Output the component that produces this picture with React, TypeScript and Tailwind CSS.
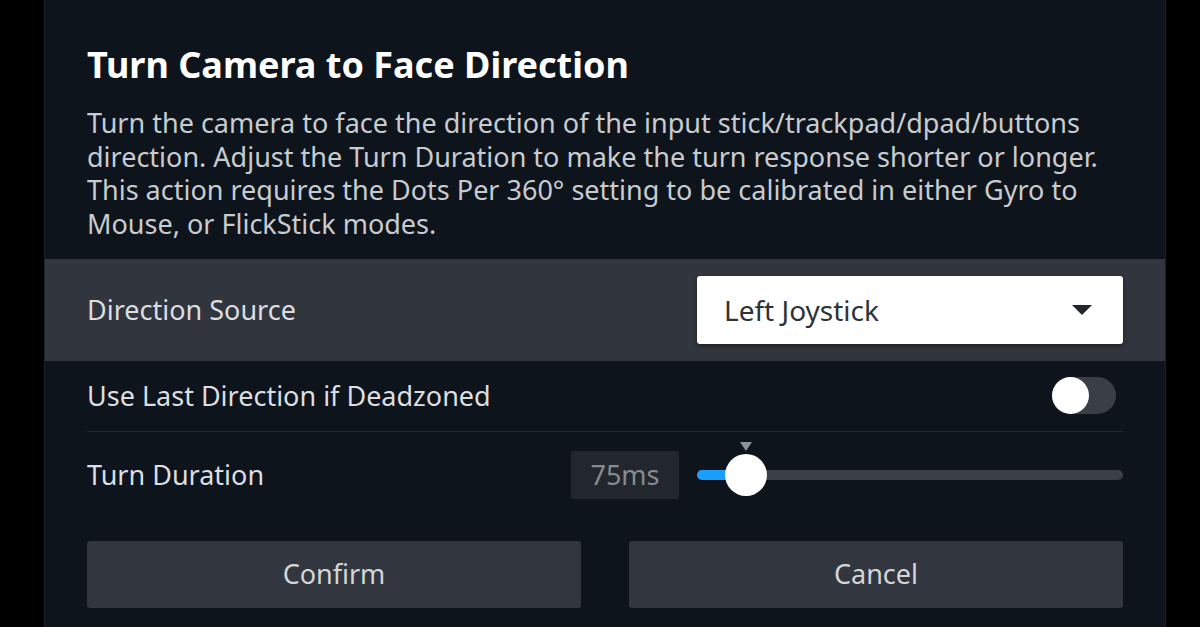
import React from "react";

const font = { fontFamily: '"Noto Sans", "Open Sans", sans-serif' };

function Toggle() {
  return (
    <div className="relative mr-[7px] h-[37px] w-[64px] rounded-full bg-[#3a3e45]">
      <div className="absolute left-0 top-0 size-[37px] rounded-full bg-white" />
    </div>
  );
}

function Slider() {
  return (
    <div className="relative flex h-[42px] flex-1 items-center">
      <div className="h-[10px] w-full rounded-full bg-[#3b3f46]" />
      <div className="absolute left-0 top-[16px] h-[10px] w-[50px] rounded-l-full bg-[#1a9fff]" />
      <div className="absolute left-[28px] top-0 size-[42px] rounded-full bg-white" />
      <div className="absolute left-[43px] top-[-12px] h-0 w-0 border-x-[6px] border-t-[9px] border-x-transparent border-t-[#8b929a]" />
    </div>
  );
}

export default function App() {
  return (
    <div className="h-[627px] w-[1200px] overflow-hidden bg-black" style={font}>
      <div className="ml-[44px] h-full w-[1122px] border-x border-[#1c2129] bg-[#0e141b]">
        <div className="px-[42px] pt-[44px]">
          <h1 className="text-[36px] font-bold leading-[42px] text-white">
            Turn Camera to Face Direction
          </h1>
          <p className="mt-[20px] text-[27px] leading-[33.7px] text-[#c8cbd0]">
            Turn the camera to face the direction of the input stick/trackpad/dpad/buttons
            <br />
            direction. Adjust the Turn Duration to make the turn response shorter or longer.
            <br />
            This action requires the Dots Per 360° setting to be calibrated in either Gyro to
            <br />
            Mouse, or FlickStick modes.
          </p>
        </div>

        <div className="mt-[18px] flex h-[102px] items-center justify-between bg-[#31353d] px-[42px]">
          <span className="text-[27px] text-[#dcdee1]">Direction Source</span>
          <div className="flex h-[68px] w-[426px] items-center justify-between rounded-[3px] bg-white pl-[27px] pr-[31px] shadow-[0_2px_4px_rgba(0,0,0,0.4)]">
            <span className="text-[28px] text-[#2f3237]">Left Joystick</span>
            <div className="h-0 w-0 border-x-[10px] border-t-[10px] border-x-transparent border-t-[#23262b]" />
          </div>
        </div>

        <div className="px-[42px]">
          <div className="flex h-[71px] items-center justify-between border-b border-[#242931]">
            <span className="text-[27px] text-[#dcdee1]">Use Last Direction if Deadzoned</span>
            <Toggle />
          </div>
          <div className="flex h-[86px] items-center">
            <span className="w-[484px] text-[27px] text-[#dcdee1]">Turn Duration</span>
            <div className="flex h-[48px] w-[108px] items-center justify-center rounded-[3px] bg-[#22262d] text-[27px] text-[#878a90]">
              75ms
            </div>
            <div className="ml-[18px] flex flex-1">
              <Slider />
            </div>
          </div>

          <div className="mt-[23px] grid grid-cols-2 gap-[48px]">
            <button className="h-[67px] rounded-[3px] bg-[#32363e] text-[27px] text-[#d3d5d9]">
              Confirm
            </button>
            <button className="h-[67px] rounded-[3px] bg-[#32363e] text-[27px] text-[#d3d5d9]">
              Cancel
            </button>
          </div>
        </div>
      </div>
    </div>
  );
}
